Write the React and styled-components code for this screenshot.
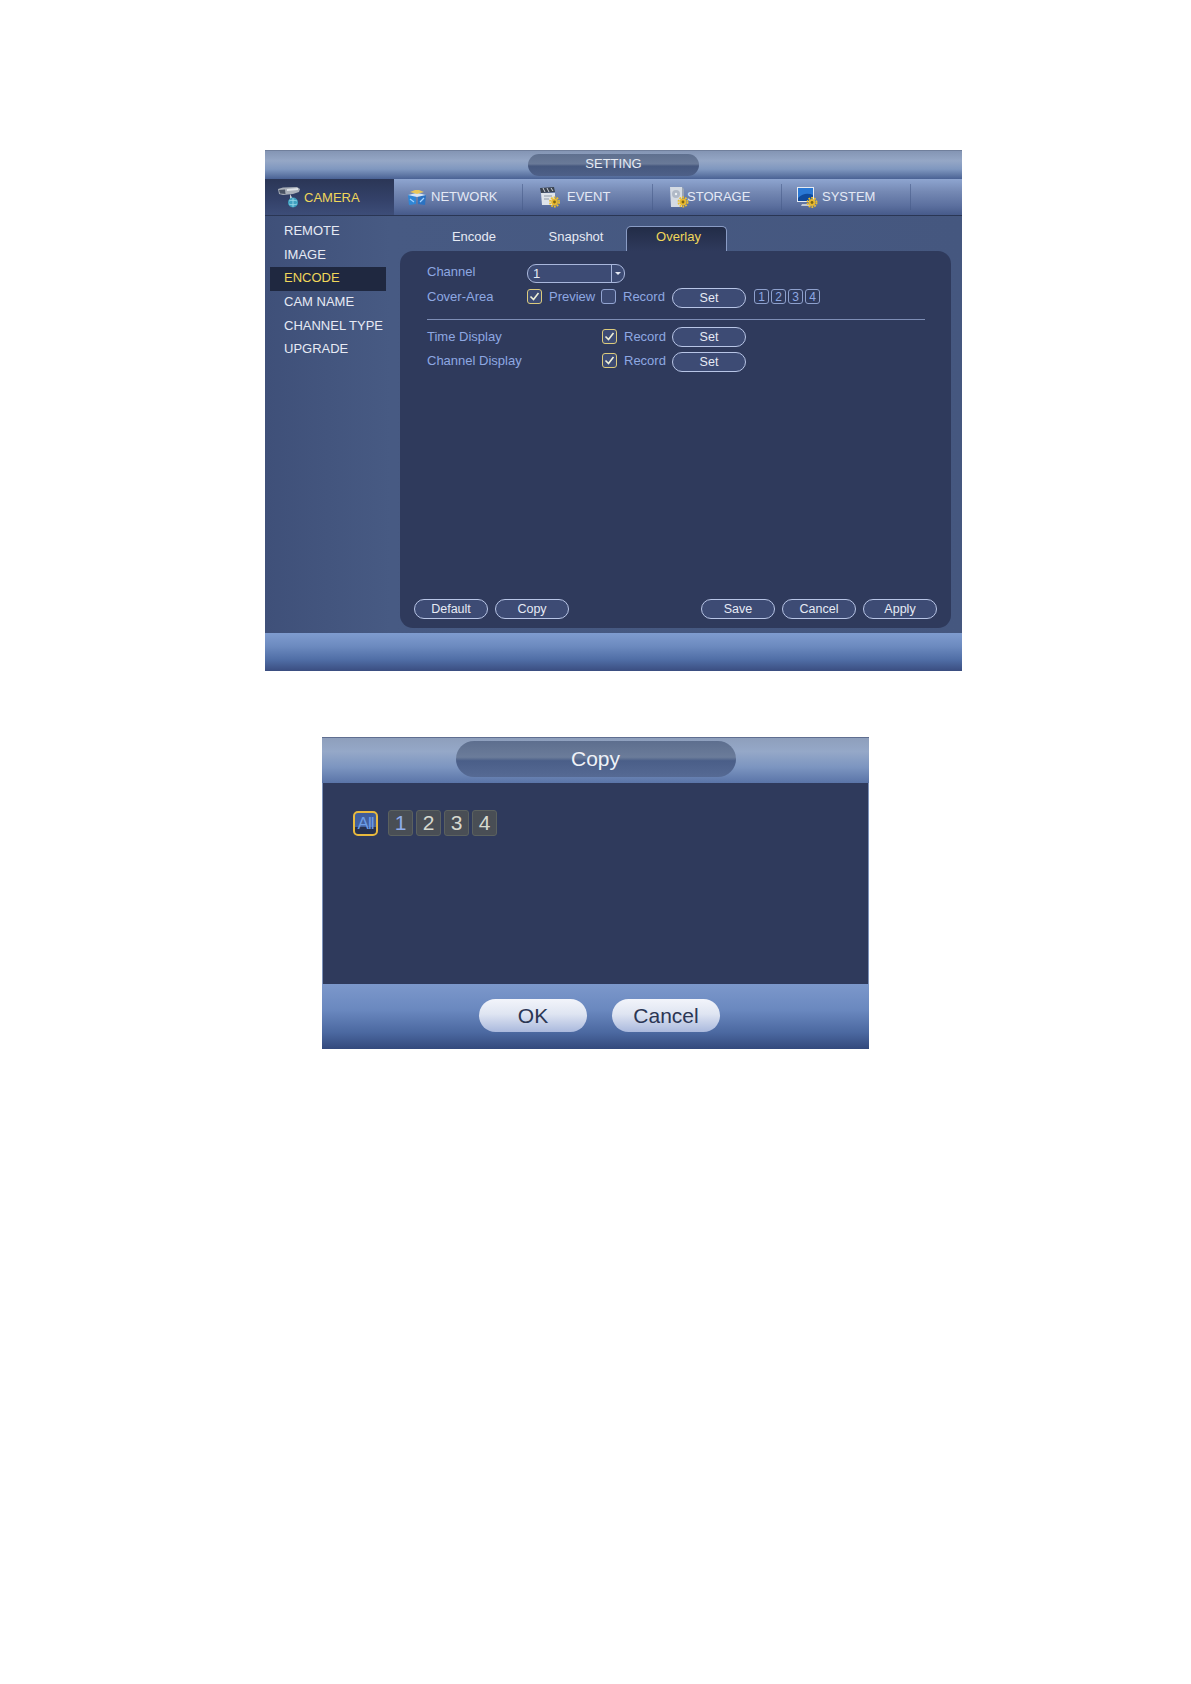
import React from "react";
import styled, { createGlobalStyle } from "styled-components";

const Global = createGlobalStyle`
  html, body { margin: 0; padding: 0; background: #fff; }
  body { font-family: "Liberation Sans", Arial, sans-serif; }
  #root { min-height: 1684px; }
`;

const Page = styled.div`
  display: flex;
  flex-direction: column;
  padding-top: 150px;
`;

const Window = styled.section`
  width: 697px;
  margin-left: 265px;
  background: linear-gradient(#3d4d75, #46587f 60%, #42547e);
  display: flex;
  flex-direction: column;
`;

const TitleBar = styled.header`
  display: flex;
  align-items: center;
  justify-content: center;
  padding-bottom: 1px;
  box-sizing: border-box;
  height: 29px;
  border-top: 1px solid #707f9c;
  background: linear-gradient(#8495b4 0%, #95a7c6 35%, #7f97bf 65%, #4a6294 100%);
`;

const TitlePill = styled.div`
  width: 171px;
  height: 22px;
  border-radius: 11px;
  display: flex;
  align-items: center;
  justify-content: center;
  padding-bottom: 2px;
  box-sizing: border-box;
  color: #e6ebf4;
  font-size: 13px;
  background: linear-gradient(#5f708f, #6a7a98 45%, #46587e 55%, #4e6088);
`;

const MenuBar = styled.nav`
  height: 37px;
  display: flex;
  border-bottom: 1px solid #2a3654;
  box-sizing: border-box;
  background: linear-gradient(#8ea5d0 0%, #7589b4 35%, #5b6f9e 75%, #465a8a 100%);
`;

const CameraTab = styled.div`
  width: 129px;
  display: flex;
  align-items: center;
  padding-left: 12px;
  gap: 3px;
  box-sizing: border-box;
  color: #f0d75a;
  font-size: 13px;
  background: linear-gradient(#2b3656, #34426a 60%, #3d4d78);
`;

const MenuItem = styled.div`
  width: ${(p) => p.$w}px;
  display: flex;
  align-items: center;
  box-sizing: border-box;
  padding-left: ${(p) => p.$pad}px;
  padding-bottom: 1px;
  gap: ${(p) => p.$gap}px;
  color: #e4e9f5;
  font-size: 13px;
  border-right: 1px solid rgba(70, 90, 135, 0.55);
  margin: 5px 0;
`;

const Body = styled.div`
  height: 417px;
  display: flex;
  background: linear-gradient(90deg, #3f5079, #475a83 18%, #45577f);
`;

const Sidebar = styled.ul`
  width: 135px;
  flex: none;
  margin: 0;
  padding: 4px 0 0 5px;
  box-sizing: border-box;
  list-style: none;
  display: flex;
  flex-direction: column;
`;

const SideItem = styled.li`
  height: 23.7px;
  width: 116px;
  display: flex;
  align-items: center;
  padding-left: 14px;
  padding-bottom: 3px;
  box-sizing: border-box;
  font-size: 13px;
  white-space: nowrap;
  color: ${(p) => (p.$active ? "#f0d75a" : "#e6eaf4")};
  background: ${(p) => (p.$active ? "#1f2840" : "transparent")};
`;

const Content = styled.div`
  width: 551px;
  display: flex;
  flex-direction: column;
`;

const Tabs = styled.div`
  height: 35px;
  display: flex;
  align-items: flex-end;
  padding-left: 22px;
`;

const Tab = styled.div`
  width: ${(p) => p.$w}px;
  height: 25px;
  display: flex;
  align-items: center;
  justify-content: center;
  padding-bottom: 4px;
  font-size: 13px;
  box-sizing: border-box;
  color: ${(p) => (p.$active ? "#f0d75a" : "#e6eaf4")};
  ${(p) =>
    p.$active
      ? `background: linear-gradient(#222c47, #2f3a5c);
         border: 1px solid #8a9cc5; border-bottom: none;
         border-radius: 5px 5px 0 0;
         padding: 0 0 6px 4px;`
      : ""}
`;

const Panel = styled.div`
  height: 377px;
  border-radius: 13px;
  background: #2f3a5c;
  padding: 8px 14px 9px 14px;
  box-sizing: border-box;
  display: flex;
  flex-direction: column;
`;

const Rows = styled.div`
  flex: 1;
  padding-left: 13px;
  display: flex;
  flex-direction: column;
`;

const Row = styled.div`
  height: ${(p) => p.$h || 24.5}px;
  display: flex;
  align-items: center;
`;

const Label = styled.span`
  width: ${(p) => p.$w}px;
  flex: none;
  color: #8ea8e2;
  font-size: 13px;
  white-space: nowrap;
`;

const Select = styled.div`
  width: 98px;
  height: 19px;
  margin-top: 3px;
  box-sizing: border-box;
  border: 1px solid #a9b7dc;
  border-radius: 9px;
  display: flex;
  align-items: center;
  color: #e6eaf4;
  font-size: 13px;
  background: #3d4b74;
  span:first-child {
    flex: 1;
    padding-left: 5px;
  }
  span:last-child {
    width: 12px;
    height: 100%;
    border-left: 1px solid #a9b7dc;
    display: flex;
    align-items: center;
    justify-content: center;
  }
`;

const Caret = styled.i`
  border: 3px solid transparent;
  border-top: 3px solid #e6eaf4;
  margin-top: 3px;
`;

const Box = styled.div`
  width: 15px;
  height: 15px;
  flex: none;
  box-sizing: border-box;
  border-radius: 3px;
  border: 1.5px solid ${(p) => (p.$on ? "#dccb7c" : "#93a5d2")};
  background: #3d4b74;
  display: flex;
  align-items: center;
  justify-content: center;
`;

const CheckText = styled.span`
  color: #8ea8e2;
  font-size: 13px;
  margin-left: 7px;
  width: ${(p) => p.$w}px;
  flex: none;
`;

const OutlineBtn = styled.button`
  width: 74px;
  height: 20px;
  padding: 0;
  flex: none;
  margin-top: ${(p) => p.$drop || 0}px;
  border: 1px solid #b8c5e6;
  border-radius: 10px;
  background: #3d4b74;
  color: #e6eaf4;
  font: 12.5px "Liberation Sans", Arial, sans-serif;
`;

const Chips = styled.div`
  display: flex;
  gap: 2px;
  margin-left: 8px;
`;

const Chip = styled.span`
  width: 15px;
  height: 15px;
  box-sizing: border-box;
  border: 1px solid #8ea0cc;
  border-radius: 3px;
  color: #8ea8e2;
  font-size: 12px;
  display: flex;
  align-items: center;
  justify-content: center;
`;

const Divider = styled.hr`
  border: none;
  border-top: 1px solid #7d8db5;
  width: 498px;
  margin: 10px 0 4px;
`;

const Actions = styled.div`
  display: flex;
  justify-content: space-between;
`;

const ActionGroup = styled.div`
  display: flex;
  gap: 7px;
`;

const BottomBar = styled.footer`
  height: 38px;
  background: linear-gradient(#7f9ccf 0%, #6c8abf 35%, #506ea6 70%, #3a4d80 100%);
`;

const Dialog = styled.section`
  width: 547px;
  margin: 66px 0 0 322px;
  display: flex;
  flex-direction: column;
`;

const DialogTitleBar = styled.header`
  height: 46px;
  display: flex;
  align-items: center;
  justify-content: center;
  padding-bottom: 3px;
  box-sizing: border-box;
  border-top: 1px solid #5f6e90;
  background: linear-gradient(#8e9fbc 0%, #95a8c8 30%, #7c95c0 65%, #5a74a8 100%);
`;

const DialogPill = styled.div`
  width: 280px;
  height: 36px;
  border-radius: 18px;
  color: #eef1f7;
  font-size: 21px;
  display: flex;
  align-items: center;
  justify-content: center;
  background: linear-gradient(#5d6e8e, #6b7c9a 45%, #4a5e88 55%, #566a94);
`;

const DialogBody = styled.div`
  height: 201px;
  box-sizing: border-box;
  background: #2f3a5c;
  border: solid #7d92ba;
  border-width: 0 1px;
  padding: 27px 0 0 30px;
  display: flex;
  align-items: flex-start;
  gap: 10px;
`;

const AllChip = styled.span`
  width: 25px;
  height: 25px;
  box-sizing: border-box;
  margin-top: 1px;
  border: 2px solid #e8b93e;
  border-radius: 5px;
  color: #6c9ce6;
  font-size: 17px;
  display: flex;
  align-items: center;
  justify-content: center;
  letter-spacing: -1px;
  background: linear-gradient(#3e5c9c 0%, #44639f 65%, #27314e 68%);
`;

const NumChips = styled.div`
  display: flex;
  gap: 3px;
`;

const NumChip = styled.span`
  width: 25px;
  height: 26px;
  box-sizing: border-box;
  border: 1px solid #5b615f;
  border-radius: 3px;
  background: #494e55;
  color: ${(p) => (p.$blue ? "#8eaceb" : "#d6d9cf")};
  font-size: 21px;
  display: flex;
  align-items: center;
  justify-content: center;
`;

const DialogFooter = styled.footer`
  height: 65px;
  display: flex;
  align-items: center;
  justify-content: center;
  gap: 25px;
  padding: 0 0 2px 8px;
  box-sizing: border-box;
  background: linear-gradient(#7c98cb 0%, #6a88bf 40%, #4b68a0 75%, #33497c 100%);
`;

const PillBtn = styled.button`
  width: 108px;
  height: 33px;
  padding: 0;
  border: none;
  border-radius: 17px;
  font: 21px "Liberation Sans", Arial, sans-serif;
  color: #2b3654;
  background: linear-gradient(#f2f4fa 0%, #dfe5f2 45%, #aab9dd 100%);
`;

const Check = () => (
  <svg width="11" height="11" viewBox="0 0 11 11">
    <path d="M1.5 5.5 L4.5 8.5 L9.5 2" fill="none" stroke="#eef0d8" strokeWidth="1.6" />
  </svg>
);

const Gear = ({ x, y }) => (
  <g transform={`translate(${x} ${y})`}>
    <circle r="4.6" fill="none" stroke="#eebf2a" strokeWidth="1.8" strokeDasharray="1.8 1.1" />
    <circle r="3.4" fill="#e8b92e" />
    <circle r="1.4" fill="#7a6418" />
  </g>
);

const CameraIcon = () => (
  <svg width="24" height="22" viewBox="0 0 24 22">
    <path d="M1 3 L6 1.5 L20 1 L23 3 L22 6 L16 8 L6 9 L2 8 Z" fill="#a9afb8" />
    <path d="M2 4 L8 3.5 L8.5 8 L3 7.5 Z" fill="#4a5364" />
    <path d="M10 3 L21 2 L21 4 L10 5 Z" fill="#dfe3e8" />
    <path d="M13 8 L16 13 L13 14 Z" fill="#c8ced8" />
    <circle cx="16" cy="16.5" r="5" fill="#3fa0c0" />
    <path d="M12 15 C14 14 18 14 20 15 M12 18 C14 19 18 19 20 18 M16 12 V21" stroke="#9fdceb" strokeWidth="0.8" fill="none" />
  </svg>
);

const NetworkIcon = () => (
  <svg width="20" height="18" viewBox="0 0 20 18">
    <path d="M1 7 L9 5 L9 16 L2 17 Z" fill="#2f86d6" />
    <path d="M11 5 L19 7 L18 17 L11 16 Z" fill="#2a72c2" />
    <path d="M1 7 L9 5 L11 5 L19 7 L10 9 Z" fill="#d8e4f4" />
    <path d="M3 4 L8 2 L12 2 L17 4 L10 6 Z" fill="#e8c65a" />
    <path d="M3 11 L7 14 M13 14 L17 10" stroke="#9fd0ff" strokeWidth="1.2" />
  </svg>
);

const EventIcon = () => (
  <svg width="22" height="22" viewBox="0 0 22 22">
    <path d="M1 2 L15 1 L16 6 L2 7 Z" fill="#39424f" />
    <path d="M4 2 L6 6 M8 2 L10 6 M12 2 L14 5" stroke="#cfd3d8" strokeWidth="1" />
    <path d="M2 7 H16 V19 H3 Z" fill="#dfe4ea" />
    <path d="M5 10 h8 M5 13 h5" stroke="#8d99a8" strokeWidth="1" />
    <Gear x={15.5} y={16} />
  </svg>
);

const StorageIcon = () => (
  <svg width="18" height="22" viewBox="0 0 18 22" overflow="visible">
    <path d="M1 1 H13 V21 H2 Z" fill="#d5dbe3" />
    <path d="M13 1 L15 3 V12 H13 Z" fill="#9ba5b4" />
    <circle cx="7" cy="8" r="4" fill="#b0b9c6" />
    <circle cx="7" cy="8" r="1.2" fill="#eef1f5" />
    <Gear x={14} y={16} />
  </svg>
);

const SystemIcon = () => (
  <svg width="22" height="22" viewBox="0 0 22 22">
    <path d="M1 1 H18 V16 H1 Z" fill="#e5eaf2" />
    <path d="M2 2 H17 V15 H2 Z" fill="#2a78d4" />
    <path d="M2 12 C7 7 12 7 17 9 V15 H2 Z" fill="#0f4a9c" />
    <path d="M6 18 H13 L15 20 H5 Z" fill="#c2c9d4" />
    <Gear x={16} y={16.5} />
  </svg>
);

const sideItems = ["REMOTE", "IMAGE", "ENCODE", "CAM NAME", "CHANNEL TYPE", "UPGRADE"];

export default function App() {
  return (
    <Page>
      <Global />
      <Window>
        <TitleBar>
          <TitlePill>SETTING</TitlePill>
        </TitleBar>
        <MenuBar>
          <CameraTab>
            <CameraIcon />
            CAMERA
          </CameraTab>
          <MenuItem $w={129} $pad={13} $gap={4}>
            <NetworkIcon />
            NETWORK
          </MenuItem>
          <MenuItem $w={130} $pad={16} $gap={6}>
            <EventIcon />
            EVENT
          </MenuItem>
          <MenuItem $w={129} $pad={16} $gap={0}>
            <StorageIcon />
            STORAGE
          </MenuItem>
          <MenuItem $w={129} $pad={14} $gap={4}>
            <SystemIcon />
            SYSTEM
          </MenuItem>
        </MenuBar>
        <Body>
          <Sidebar>
            {sideItems.map((s) => (
              <SideItem key={s} $active={s === "ENCODE"}>
                {s}
              </SideItem>
            ))}
          </Sidebar>
          <Content>
            <Tabs>
              <Tab $w={104}>Encode</Tab>
              <Tab $w={100}>Snapshot</Tab>
              <Tab $w={101} $active>
                Overlay
              </Tab>
            </Tabs>
            <Panel>
              <Rows>
                <Row $h={25.5}>
                  <Label $w={100}>Channel</Label>
                  <Select>
                    <span>1</span>
                    <span>
                      <Caret />
                    </span>
                  </Select>
                </Row>
                <Row>
                  <Label $w={100}>Cover-Area</Label>
                  <Box $on>
                    <Check />
                  </Box>
                  <CheckText $w={52}>Preview</CheckText>
                  <Box />
                  <CheckText $w={49}>Record</CheckText>
                  <OutlineBtn $drop={3}>Set</OutlineBtn>
                  <Chips>
                    <Chip>1</Chip>
                    <Chip>2</Chip>
                    <Chip>3</Chip>
                    <Chip>4</Chip>
                  </Chips>
                </Row>
                <Divider />
                <Row>
                  <Label $w={175}>Time Display</Label>
                  <Box $on>
                    <Check />
                  </Box>
                  <CheckText $w={48}>Record</CheckText>
                  <OutlineBtn $drop={2}>Set</OutlineBtn>
                </Row>
                <Row>
                  <Label $w={175}>Channel Display</Label>
                  <Box $on>
                    <Check />
                  </Box>
                  <CheckText $w={48}>Record</CheckText>
                  <OutlineBtn $drop={2}>Set</OutlineBtn>
                </Row>
              </Rows>
              <Actions>
                <ActionGroup>
                  <OutlineBtn>Default</OutlineBtn>
                  <OutlineBtn>Copy</OutlineBtn>
                </ActionGroup>
                <ActionGroup>
                  <OutlineBtn>Save</OutlineBtn>
                  <OutlineBtn>Cancel</OutlineBtn>
                  <OutlineBtn>Apply</OutlineBtn>
                </ActionGroup>
              </Actions>
            </Panel>
          </Content>
        </Body>
        <BottomBar />
      </Window>
      <Dialog>
        <DialogTitleBar>
          <DialogPill>Copy</DialogPill>
        </DialogTitleBar>
        <DialogBody>
          <AllChip>All</AllChip>
          <NumChips>
            <NumChip $blue>1</NumChip>
            <NumChip>2</NumChip>
            <NumChip>3</NumChip>
            <NumChip>4</NumChip>
          </NumChips>
        </DialogBody>
        <DialogFooter>
          <PillBtn>OK</PillBtn>
          <PillBtn>Cancel</PillBtn>
        </DialogFooter>
      </Dialog>
    </Page>
  );
}
